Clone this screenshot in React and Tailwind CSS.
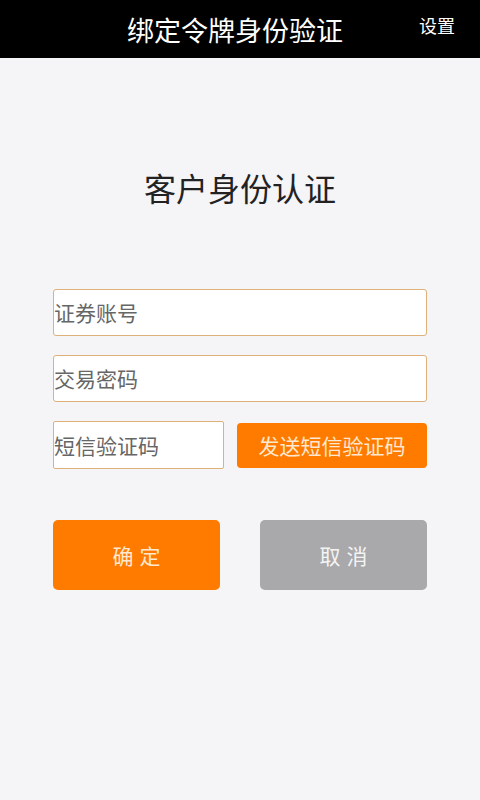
import React from "react";

const font = { fontFamily: '"Noto Sans CJK SC", "Noto Sans", sans-serif' };

export default function App() {
  return (
    <div className="w-[480px] h-[800px] bg-[#f5f4f7] flex flex-col" style={font}>
      <div className="h-[58px] bg-black flex items-center relative shrink-0">
        <div className="flex-1 text-center text-white text-[27px] leading-none pr-[10px]">绑定令牌身份验证</div>
        <div className="absolute right-[25px] top-[16px] text-white text-[18px] leading-none">设置</div>
      </div>
      <div className="flex flex-col px-[53px]">
        <div className="mt-[113px] text-center text-[32px] leading-none text-[#222]">客户身份认证</div>
        <div className="mt-[86px] h-[47px] bg-white border border-[#dcb27a] rounded-[3px] flex items-center text-[21px] text-[#666] leading-none">证券账号</div>
        <div className="mt-[19px] h-[47px] bg-white border border-[#dcb27a] rounded-[3px] flex items-center text-[21px] text-[#666] leading-none">交易密码</div>
        <div className="mt-[19px] flex items-center gap-[13px]">
          <div className="w-[171px] h-[48px] bg-white border border-[#dcb27a] rounded-[2px] flex items-center text-[21px] text-[#666] leading-none">短信验证码</div>
          <div className="flex-1 h-[45px] bg-[#ff7b00] rounded-[4px] flex items-center justify-center text-[21px] text-[#ffe8d0] leading-none">发送短信验证码</div>
        </div>
        <div className="mt-[51px] flex justify-between">
          <div className="w-[167px] h-[70px] bg-[#ff7b00] rounded-[5px] flex items-center justify-center pl-[6px] text-[21px] text-[#ffe8d0] tracking-[6px] leading-none">确定</div>
          <div className="w-[167px] h-[70px] bg-[#a9a8ab] rounded-[5px] flex items-center justify-center pl-[6px] text-[21px] text-[#f4f4f4] tracking-[6px] leading-none">取消</div>
        </div>
      </div>
    </div>
  );
}
